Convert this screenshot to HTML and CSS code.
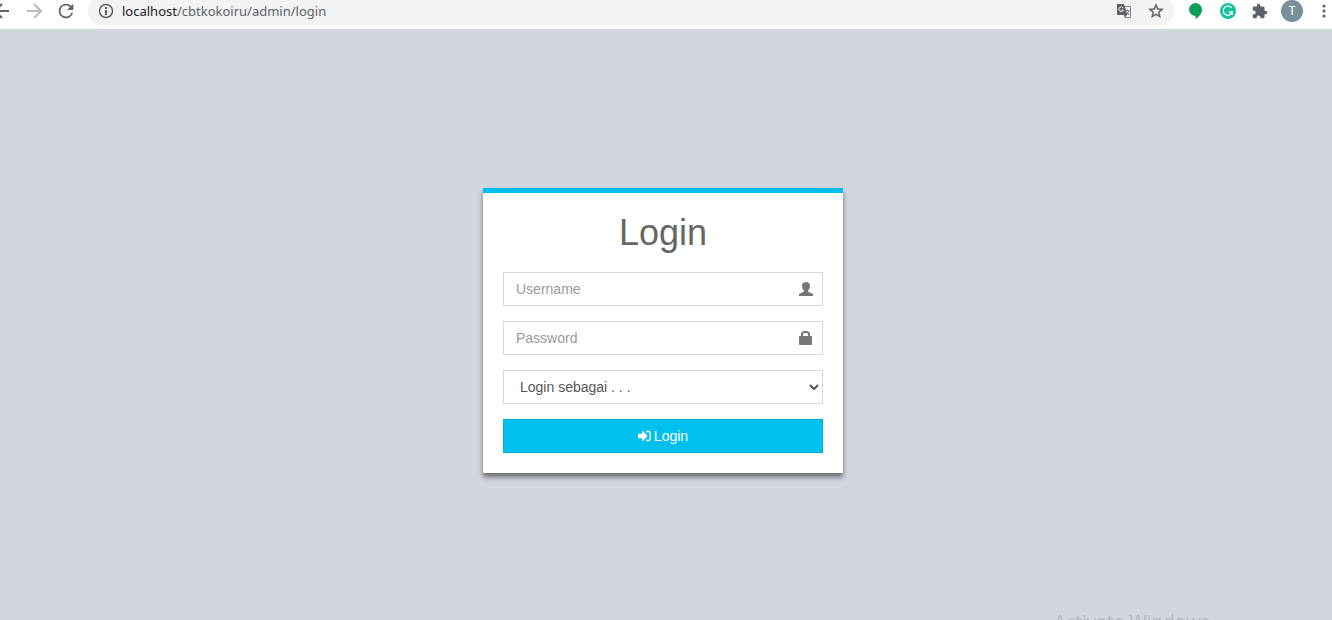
FILE: index.html
```html
<!DOCTYPE html>
<html lang="id">

<head>
    <meta charset="utf-8">
    <title>Login</title>
    <link rel="stylesheet" href="styles.css">
</head>

<body>
    <header class="toolbar">
        <button type="button" class="tool" aria-label="Back">
            <svg width="24" height="24" viewBox="0 0 24 24" fill="none" stroke="#5f6368" stroke-width="2"><path d="M19 12H6M12 5l-7 7 7 7"/></svg>
        </button>
        <button type="button" class="tool" aria-label="Forward">
            <svg width="24" height="24" viewBox="0 0 24 24" fill="none" stroke="#babcbe" stroke-width="2"><path d="M5 12h13M12 5l7 7-7 7"/></svg>
        </button>
        <button type="button" class="tool" aria-label="Reload">
            <svg width="22" height="22" viewBox="0 0 24 24" fill="#5f6368"><path d="M17.65 6.35A7.96 7.96 0 0 0 12 4a8 8 0 1 0 7.73 10h-2.08A6 6 0 1 1 12 6c1.66 0 3.14.69 4.22 1.78L13 11h7V4z"/></svg>
        </button>
        <div class="address">
            <svg width="16" height="16" viewBox="0 0 16 16" fill="#5f6368"><circle cx="8" cy="8" r="6.5" fill="none" stroke="#5f6368" stroke-width="1.5"/><path d="M7 7h2v5H7zM7 4h2v2H7z"/></svg>
            <span class="url"><span class="host">localhost</span>/cbtkokoiru/admin/login</span>
            <button type="button" class="tool" aria-label="Translate">
                <svg width="16" height="16" viewBox="0 0 16 16"><path d="M6 3.500h8.500v11H9z" fill="#f1f3f4" stroke="#80868b"/><path d="M1 1h7l3.500 11H1.500L1 11.500z" fill="#5f6368"/><path d="M7 4.800A2.300 2.300 0 1 0 7.300 7H5.200" fill="none" stroke="#f1f3f4"/><path d="M10 7.500h3.500M11.500 6.500v1M13 7.500c-.3 1.600-1 2.800-2 3.600M11 9l2 3" fill="none" stroke="#80868b"/><path d="M8.500 12H11l-2 2.500z" fill="#5f6368"/></svg>
            </button>
            <button type="button" class="tool" aria-label="Bookmark">
                <svg width="18" height="18" viewBox="0 0 24 24" fill="#5f6368" stroke="#5f6368" stroke-width=".5"><path d="M22 9.240l-7.190-.62L12 2 9.190 8.630 2 9.240l5.460 4.730L5.820 21 12 17.270 18.180 21l-1.630-7.030zM12 15.400l-3.760 2.270 1-4.280-3.320-2.880 4.380-.38L12 6.100l1.710 4.040 4.380.38-3.320 2.880 1 4.280z"/></svg>
            </button>
        </div>
        <button type="button" class="tool" aria-label="Hangouts">
            <svg width="16" height="18" viewBox="0 0 16 18" fill="#0f9d58"><path d="M7.500 1a6.500 6.500 0 0 1 6.500 6.500c0 4-3 7.500-6.500 9.500v-3A6.500 6.500 0 0 1 7.500 1z"/></svg>
        </button>
        <button type="button" class="tool" aria-label="Grammarly">
            <svg width="16" height="16" viewBox="0 0 16 16"><circle cx="8" cy="8" r="8" fill="#15c39a"/><path d="M11.500 4.800A4.600 4.600 0 1 0 12.300 9H9M12.300 8.500v3.500" fill="none" stroke="#fff" stroke-width="1.300"/></svg>
        </button>
        <button type="button" class="tool" aria-label="Extensions">
            <svg width="16" height="16" viewBox="1 0 23 23" fill="#5f6368"><path d="M20.500 11H19V7a2 2 0 0 0-2-2h-4V3.500a2.500 2.500 0 0 0-5 0V5H4a2 2 0 0 0-2 2v3.800h1.500a2.700 2.700 0 0 1 0 5.400H2V20a2 2 0 0 0 2 2h3.800v-1.500a2.700 2.700 0 0 1 5.400 0V22H17a2 2 0 0 0 2-2v-4h1.500a2.500 2.500 0 0 0 0-5z"/></svg>
        </button>
        <button type="button" class="tool" aria-label="Profile"><span class="avatar">T</span></button>
        <button type="button" class="tool" aria-label="Menu">
            <svg width="16" height="16" viewBox="0 0 16 16" fill="#5f6368"><circle cx="8" cy="3" r="1.600"/><circle cx="8" cy="8" r="1.600"/><circle cx="8" cy="13" r="1.600"/></svg>
        </button>
    </header>

    <main class="login-page">
        <form class="login-box">
            <h1>Login</h1>
            <div class="form-group">
                <input type="text" class="form-control" placeholder="Username" aria-label="Username">
                <svg class="feedback" width="14" height="14" viewBox="0 0 14 14" fill="#777"><path d="M7 0c2.500 0 4 1.400 4 3.800 0 2-.7 3.600-1.800 4.500v.9c0 .5.400.8.900 1l2.600 1.100c.8.300 1.300.8 1.300 1.600V14H0v-1.100c0-.8.500-1.300 1.300-1.600l2.600-1.100c.5-.2.900-.5.900-1v-.9C3.700 7.400 3 5.800 3 3.800 3 1.400 4.500 0 7 0z"/></svg>
            </div>
            <div class="form-group">
                <input type="password" class="form-control" placeholder="Password" aria-label="Password">
                <svg class="feedback" width="14" height="14" viewBox="0 0 14 14" fill="#777"><path fill-rule="evenodd" d="M2 5V3.500A3.500 3.500 0 0 1 5.500 0h2A3.500 3.500 0 0 1 11 3.500V5h1.200c.5 0 .8.300.8.800v7.400c0 .5-.3.800-.8.800H.8c-.5 0-.8-.3-.8-.8V5.800C0 5.300.3 5 .8 5zm2 0h5V3.500C9 2.600 8.400 2 7.500 2h-2C4.600 2 4 2.600 4 3.500z"/></svg>
            </div>
            <div class="form-group">
                <select class="form-control" aria-label="Login sebagai">
                    <option>Login sebagai . . .</option>
                    <option>Admin</option>
                    <option>Guru</option>
                </select>
            </div>
            <button type="submit" class="btn-login">
                <svg width="13" height="12" viewBox="0 0 13 12" fill="#fff"><path d="M0 4.200c0-.3.200-.5.500-.5H4V1.500c0-.5.500-.7.900-.4l4.300 4.400c.3.300.3.700 0 1L4.900 10.900c-.4.300-.9.100-.9-.4V8.300H.5c-.3 0-.5-.2-.5-.5z"/><path d="M8 1.500h2.500c1 0 1.700.7 1.700 1.700v5.600c0 1-.7 1.700-1.700 1.700H8" fill="none" stroke="#fff" stroke-width="1.300"/></svg>
                Login
            </button>
        </form>
    </main>

    <div class="watermark">Activate Windows</div>
</body>

</html>
```
FILE: styles.css
```css
* {
    box-sizing: border-box;
}

body {
    margin: 0;
    min-height: 100vh;
    display: flex;
    flex-direction: column;
    background: #d2d6de;
    color: #666;
    font: 14px/20px "Liberation Sans", Arial, sans-serif;
    overflow-x: hidden;
}

button {
    font: inherit;
    cursor: pointer;
}

/* browser bar */
.toolbar {
    display: flex;
    align-items: center;
    height: 29px;
    padding-bottom: 7px;
    margin: 0 -8px 0 -14px;
    background: #fff;
}

.tool {
    display: flex;
    flex: none;
    align-items: center;
    justify-content: center;
    width: 32px;
    height: 28px;
    padding: 0;
    border: 0;
    background: none;
}

.address {
    display: flex;
    flex: 1;
    align-items: center;
    height: 28px;
    margin: 0 6px;
    padding: 0 2px 0 10px;
    border-radius: 14px;
    background: #f1f3f4;
}

.url {
    flex: 1;
    margin-left: 8px;
    color: #5f6368;
    font-family: "Noto Sans", "Open Sans", sans-serif;
    font-size: 13px;
}

.host {
    color: #202124;
}

.avatar {
    width: 22px;
    height: 22px;
    border-radius: 50%;
    background: #78909c;
    color: #fff;
    font: 12px/22px Roboto, sans-serif;
    text-align: center;
}

/* login */
.login-page {
    flex: 1;
    padding: 159px 6px 20px 0;
}

.login-box {
    width: 360px;
    max-width: 90%;
    margin: 0 auto;
    padding: 20px;
    border-top: 5px solid #00c0ef;
    background: #fff;
    box-shadow: 0 4px 5px rgba(0, 0, 0, 0.5);
}

.login-box h1 {
    margin: 0 0 19px;
    font-size: 36px;
    font-weight: 400;
    line-height: 40px;
    text-align: center;
}

.form-group {
    position: relative;
    margin-bottom: 15px;
}

.form-control {
    display: block;
    width: 100%;
    height: 34px;
    padding: 6px 12px;
    border: 1px solid #d2d6de;
    border-radius: 0;
    background: #fff;
    color: #555;
    font: inherit;
}

.form-control::placeholder {
    color: #999;
    opacity: 1;
}

select.form-control {
    padding-right: 13px;
}

input.form-control {
    padding-right: 42px;
}

/* icon on top of the input */
.feedback {
    position: absolute;
    top: 10px;
    right: 10px;
    pointer-events: none;
}

.btn-login {
    display: flex;
    align-items: center;
    justify-content: center;
    gap: 3px;
    width: 100%;
    height: 34px;
    border: 1px solid #00acd6;
    background: #00c0ef;
    color: #fff;
}

.watermark {
    position: fixed;
    right: 122px;
    bottom: -15px;
    color: #b4b7bd;
    font: 19px/28px "Open Sans", "Noto Sans", sans-serif;
    pointer-events: none;
}
```
